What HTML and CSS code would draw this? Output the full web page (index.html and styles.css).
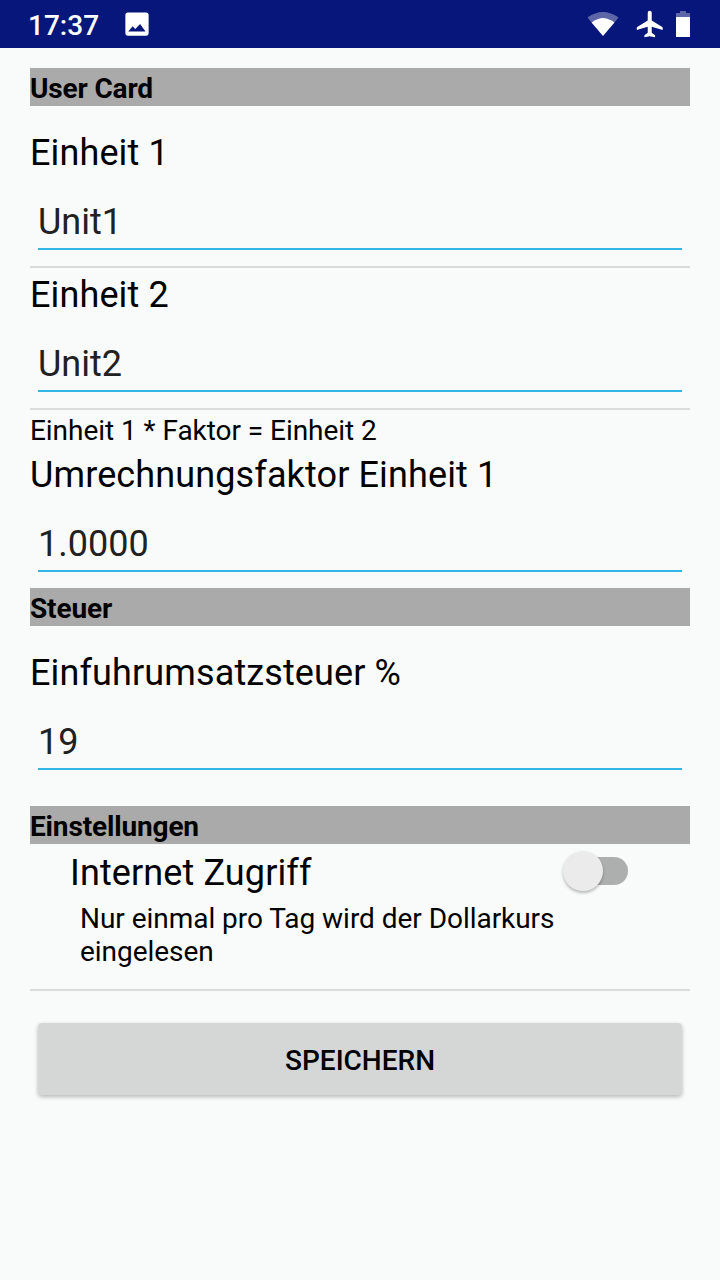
FILE: index.html
```html
<!DOCTYPE html>
<html lang="de">
<head>
<meta charset="utf-8">
<title>User Card</title>
<link rel="stylesheet" href="styles.css">
</head>
<body>
<header class="status">
  <span class="time">17:37</span>
  <svg class="photo" viewBox="0 0 24 24"><path d="M21.300 19.400V4.600c0-1.100-.8-1.900-1.900-1.900H4.600c-1.100 0-1.900.8-1.900 1.900v14.800c0 1.100.8 1.900 1.900 1.900h14.800c1.100 0 1.900-.8 1.900-1.900zM8.500 13.700l2.100 2.300L14.500 12l4.300 5.900H5z"/></svg>
  <svg class="wifi" viewBox="0 0 32 26"><path class="faint" d="M.5 6.500Q16-4.500 31.500 6.500L27.500 11.500Q16 2.500 4.500 11.500z"/><path d="M4.500 11.500Q16 2.500 27.500 11.500L16 25z"/></svg>
  <svg class="plane" viewBox="0 0 24 24"><path d="M21.500 16.500v-2L13.300 9.300V3.500a1.500 1.500 0 0 0-3 0v5.800L2.100 14.500v2l8.200-2.400v4.500L7.800 20.500V22l4-.9 4 .9v-1.500l-2.500-1.900v-4.500z"/></svg>
  <svg class="battery" viewBox="0 0 14 26"><path class="faint" d="M4 0h6v2h4v4H0V2h4z"/><path d="M0 6h14v20H0z"/></svg>
</header>
<main class="form">
  <h2 class="section">User Card</h2>
  <div class="field first"><label for="unit1">Einheit 1</label><input id="unit1" value="Unit1"></div>
  <hr class="divider">
  <div class="field"><label for="unit2">Einheit 2</label><input id="unit2" value="Unit2"></div>
  <hr class="divider">
  <p class="formula">Einheit 1 * Faktor = Einheit 2</p>
  <div class="field factor"><label for="factor">Umrechnungsfaktor Einheit 1</label><input id="factor" value="1.0000"></div>
  <h2 class="section">Steuer</h2>
  <div class="field tax"><label for="tax">Einfuhrumsatzsteuer %</label><input id="tax" value="19"></div>
  <h2 class="section">Einstellungen</h2>
  <div class="setting"><span class="setting-name">Internet Zugriff</span><span class="switch"><span class="thumb"></span></span></div>
  <p class="hint">Nur einmal pro Tag wird der Dollarkurs eingelesen</p>
  <hr class="divider">
  <button class="save">SPEICHERN</button>
</main>
</body>
</html>
```
FILE: styles.css
```css
* { box-sizing: border-box; }
body { margin: 0; min-height: 1280px; background: #f9fbfa; color: #000; font-family: Roboto, sans-serif; }
.status { display: flex; align-items: center; height: 48px; padding: 0 30px 0 28px; background: #07167a; color: #fff; }
.status svg { fill: #fff; flex: none; }
.status .faint { fill-opacity: .35; }
.time { width: 94px; font-size: 28px; font-weight: 500; line-height: 50px; padding-top: 3px; }
.photo { width: 30px; height: 30px; }
.wifi { width: 32px; height: 26px; margin-left: auto; }
.plane { width: 32px; height: 32px; margin-left: 15px; }
.battery { width: 14px; height: 26px; margin-left: 10px; }
.form { padding: 20px 30px 0; }
.section { margin: 0; height: 38px; padding-top: 2px; background: #aaa; font-size: 28px; font-weight: 700; line-height: 37px; letter-spacing: -.15px; }
.field { height: 140px; padding-top: 5px; }
.field.first { height: 160px; padding-top: 25px; }
.field.factor { height: 142px; padding-top: 7px; }
.field.tax { height: 180px; padding-top: 25px; }
.field label { display: block; height: 44px; font-size: 36px; line-height: 44px; letter-spacing: .12px; }
.field input { display: block; width: 644px; height: 55px; margin: 20px 8px 0; padding: 1px 0 0; border: 0; border-bottom: 2px solid #33b5e5; border-radius: 0; outline: 0; background: transparent; color: #212121; font: 36px/44px Roboto, sans-serif; }
.divider { height: 2px; margin: 0; border: 0; background: #dadbdb; }
.formula { margin: 0; height: 36px; padding-top: 4px; font-size: 28px; line-height: 34px; letter-spacing: -.05px; }
.setting { display: flex; justify-content: space-between; align-items: center; height: 56px; padding: 0 62px 0 40px; }
.setting-name { font-size: 36px; line-height: 44px; padding-top: 2px; letter-spacing: .12px; }
.switch { display: flex; align-items: center; width: 64px; height: 28px; margin-bottom: 2px; border-radius: 14px; background: #adaeae; }
.thumb { flex: none; width: 40px; height: 40px; margin-left: -1px; border-radius: 50%; background: #ebebeb; box-shadow: 0 2px 3px #0004; }
.hint { width: 580px; height: 89px; margin: 0 0 0 50px; padding-top: 2px; font-size: 28px; line-height: 33px; letter-spacing: -.04px; }
.save { display: block; width: 644px; height: 72px; margin: 32px 8px 0; padding: 3px 0 0; border: 0; border-radius: 4px; background: #d5d7d6; box-shadow: 0 2px 4px #0004; color: #000; font: 500 28px/34px Roboto, sans-serif; }
```
